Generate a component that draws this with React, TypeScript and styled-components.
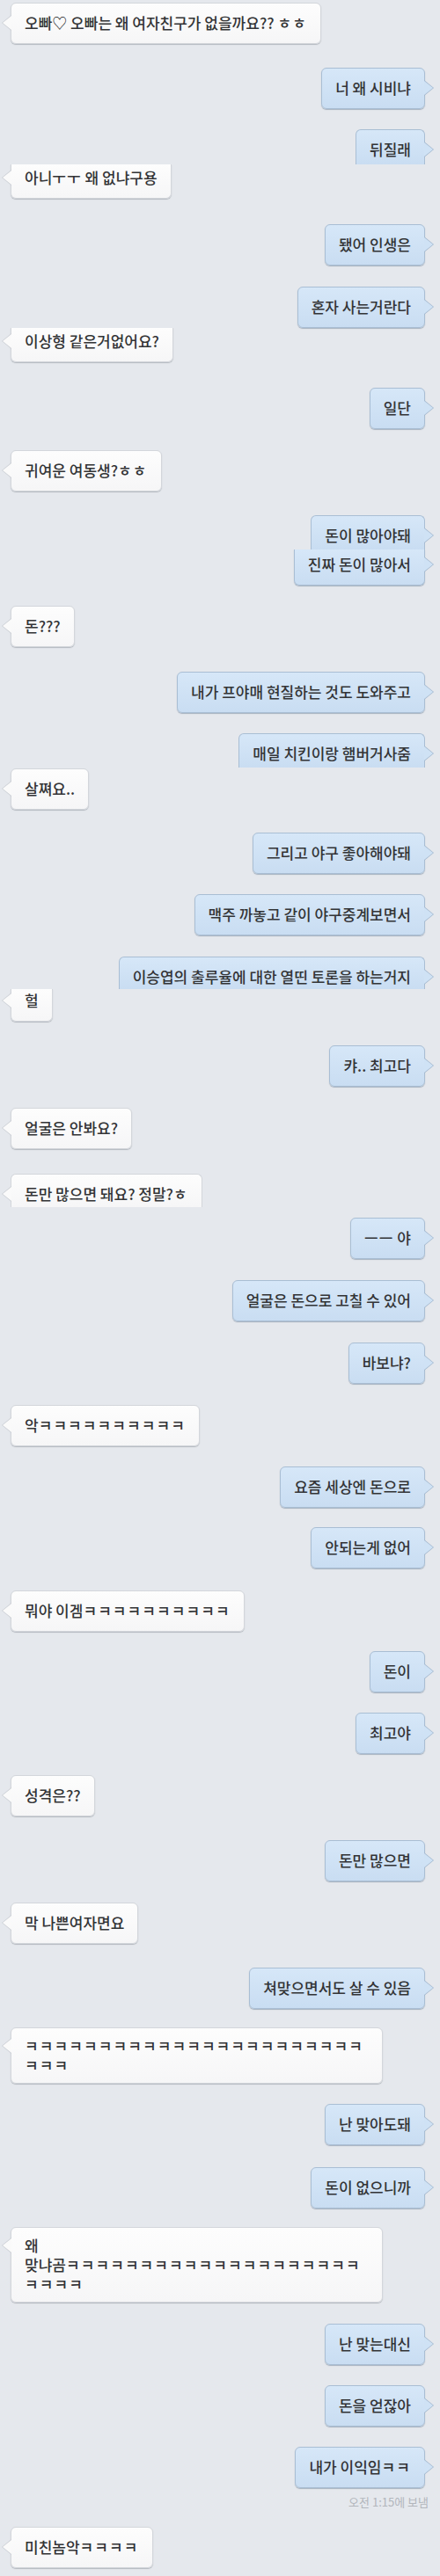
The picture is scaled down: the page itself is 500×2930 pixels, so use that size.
import React from "react";
import styled, { createGlobalStyle, css } from "styled-components";

const GlobalStyle = createGlobalStyle`
  html, body {
    margin: 0;
    padding: 0;
    background: #e5e8ed;
  }
  body {
    font-family: "Noto Sans CJK KR", "Noto Sans", sans-serif;
  }
`;

const Page = styled.div`
  width: 500px;
  min-height: 2930px;
  box-sizing: border-box;
  padding: 3px 17px 0 12px;
  background: #e5e8ed;
  display: flex;
  flex-direction: column;
`;

const Row = styled.div<{ $side: "left" | "right"; $mt: number }>`
  display: flex;
  justify-content: ${(p) => (p.$side === "left" ? "flex-start" : "flex-end")};
  margin-top: ${(p) => p.$mt}px;
`;

type BubbleProps = {
  $side: "left" | "right";
  $cutTop: number;
  $cutBottom: number;
  $multi: boolean;
};

const padTop = (p: BubbleProps) => (p.$multi ? 9 : 11) - p.$cutTop + (p.$cutTop > 0 ? 1 : 0);
const padBottom = (p: BubbleProps) =>
  (p.$multi ? 9 : 12) - p.$cutBottom + (p.$cutBottom > 0 ? 1 : 0);

const Bubble = styled.div<BubbleProps>`
  position: relative;
  box-sizing: border-box;
  max-width: 423px;
  padding: ${(p) => padTop(p)}px 15px ${(p) => padBottom(p)}px;
  font-size: 17px;
  line-height: 22px;
  font-weight: 500;
  color: #333436;
  white-space: pre-wrap;
  word-break: break-all;
  border-radius: 6px;
  ${(p) =>
    p.$side === "left"
      ? css`
          background: linear-gradient(#fdfdfd, #f6f6f7);
          border: 1px solid #d3d6db;
          box-shadow: 0 1px 1px rgba(120, 126, 136, 0.45);
        `
      : css`
          background: linear-gradient(#d6e7f8, #c9ddf2);
          border: 1px solid #a9bed4;
          box-shadow: 0 1px 1px rgba(90, 110, 135, 0.45);
        `}
  ${(p) =>
    p.$cutTop > 0 &&
    css`
      border-top: none;
      border-top-left-radius: 0;
      border-top-right-radius: 0;
    `}
  ${(p) =>
    p.$cutBottom > 0 &&
    css`
      border-bottom: none;
      border-bottom-left-radius: 0;
      border-bottom-right-radius: 0;
      box-shadow: none;
    `}

  &::before,
  &::after {
    content: "";
    position: absolute;
    width: 0;
    height: 0;
    border-style: solid;
    border-color: transparent;
  }
  &::before {
    top: ${(p) => padTop(p) + 11 - 9}px;
    border-width: 9px 0 9px 0;
    ${(p) =>
      p.$side === "left"
        ? css`
            left: -11px;
            border-right: 11px solid #c9cdd3;
          `
        : css`
            right: -11px;
            border-left: 11px solid #a3b8ce;
          `}
  }
  &::after {
    top: ${(p) => padTop(p) + 11 - 8}px;
    border-width: 8px 0 8px 0;
    ${(p) =>
      p.$side === "left"
        ? css`
            left: -10px;
            border-right: 10px solid #fafafa;
          `
        : css`
            right: -10px;
            border-left: 10px solid #cfe2f5;
          `}
  }
`;

const Jamo = styled.span`
  letter-spacing: 1.1px;
`;

const TimeRow = styled.div<{ $mt: number }>`
  display: flex;
  justify-content: flex-end;
  margin-top: ${(p) => p.$mt}px;
  margin-right: -4px;
`;

const TimeLabel = styled.span`
  font-size: 13px;
  line-height: 16px;
  color: #b2b6bc;
`;

type Msg = {
  side: "left" | "right";
  text: string;
  mt: number;
  cutTop?: number;
  cutBottom?: number;
  multi?: boolean;
};

const K = (n: number) => "ㅋ".repeat(n);

const messages: Msg[] = [
  { side: "left", text: "오빠♡ 오빠는 왜 여자친구가 없을까요?? ㅎㅎ", mt: 0 },
  { side: "right", text: "너 왜 시비냐", mt: 27 },
  { side: "right", text: "뒤질래", mt: 23, cutBottom: 7 },
  { side: "left", text: "아니ㅜㅜ 왜 없냐구용", mt: 0, cutTop: 8 },
  { side: "right", text: "됐어 인생은", mt: 29 },
  { side: "right", text: "혼자 사는거란다", mt: 24 },
  { side: "left", text: "이상형 같은거없어요?", mt: 0, cutTop: 8 },
  { side: "right", text: "일단", mt: 29 },
  { side: "left", text: "귀여운 여동생?ㅎㅎ", mt: 24 },
  { side: "right", text: "돈이 많아야돼", mt: 27, cutBottom: 8 },
  { side: "right", text: "진짜 돈이 많아서", mt: 0, cutTop: 6 },
  { side: "left", text: "돈???", mt: 23 },
  { side: "right", text: "내가 프야매 현질하는 것도 도와주고", mt: 28 },
  { side: "right", text: "매일 치킨이랑 햄버거사줌", mt: 23, cutBottom: 8 },
  { side: "left", text: "살쪄요..", mt: 1 },
  { side: "right", text: "그리고 야구 좋아해야돼", mt: 26 },
  { side: "right", text: "맥주 까놓고 같이 야구중계보면서", mt: 23 },
  { side: "right", text: "이승엽의 출루율에 대한 열띤 토론을 하는거지", mt: 24, cutBottom: 10 },
  { side: "left", text: "헐", mt: 0, cutTop: 10 },
  { side: "right", text: "캬.. 최고다", mt: 27 },
  { side: "left", text: "얼굴은 안봐요?", mt: 24 },
  { side: "left", text: "돈만 많으면 돼요? 정말?ㅎ", mt: 28, cutBottom: 9 },
  { side: "right", text: "ㅡㅡ 야", mt: 12 },
  { side: "right", text: "얼굴은 돈으로 고칠 수 있어", mt: 24 },
  { side: "right", text: "바보냐?", mt: 24 },
  { side: "left", text: "악" + K(10), mt: 24 },
  { side: "right", text: "요즘 세상엔 돈으로", mt: 23 },
  { side: "right", text: "안되는게 없어", mt: 22 },
  { side: "left", text: "뭐야 이겜" + K(10), mt: 25 },
  { side: "right", text: "돈이", mt: 22 },
  { side: "right", text: "최고야", mt: 23 },
  { side: "left", text: "성격은??", mt: 24 },
  { side: "right", text: "돈만 많으면", mt: 27 },
  { side: "left", text: "막 나쁜여자면요", mt: 24 },
  { side: "right", text: "쳐맞으면서도 살 수 있음", mt: 27 },
  { side: "left", text: K(26), mt: 21, multi: true },
  { side: "right", text: "난 맞아도돼", mt: 23 },
  { side: "right", text: "돈이 없으니까", mt: 25 },
  { side: "left", text: "왜\n맞냐곰" + K(24), mt: 21, multi: true },
  { side: "right", text: "난 맞는대신", mt: 24 },
  { side: "right", text: "돈을 얻잖아", mt: 23 },
  { side: "right", text: "내가 이익임ㅋㅋ", mt: 23 },
];

const lastMessage: Msg = { side: "left", text: "미친놈악ㅋㅋㅋㅋ", mt: 20 };

const renderText = (text: string) =>
  text.split(/([\u3131-\u318E]+)/).map((part, i) =>
    /^[\u3131-\u318E]+$/.test(part) ? <Jamo key={i}>{part}</Jamo> : part
  );

const Message = ({ m }: { m: Msg }) => (
  <Row $side={m.side} $mt={m.mt}>
    <Bubble
      $side={m.side}
      $cutTop={m.cutTop ?? 0}
      $cutBottom={m.cutBottom ?? 0}
      $multi={!!m.multi}
    >
      {renderText(m.text)}
    </Bubble>
  </Row>
);

export default function App() {
  return (
    <>
      <GlobalStyle />
      <Page>
        {messages.map((m, i) => (
          <Message key={i} m={m} />
        ))}
        <TimeRow $mt={8}>
          <TimeLabel>오전 1:15에 보냄</TimeLabel>
        </TimeRow>
        <Message m={lastMessage} />
      </Page>
    </>
  );
}
